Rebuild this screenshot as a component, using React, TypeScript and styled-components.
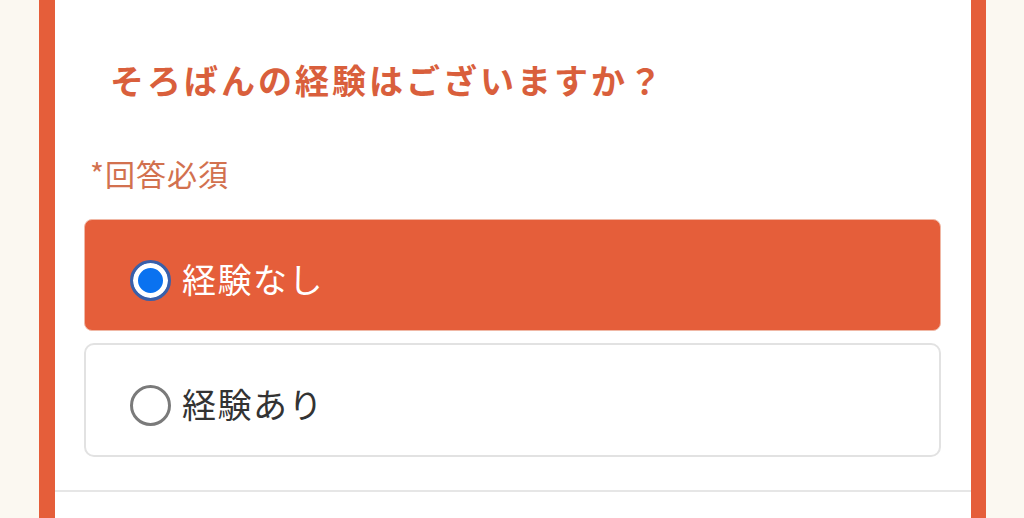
import React from "react";
import styled, { createGlobalStyle } from "styled-components";

const Global = createGlobalStyle`
  html, body { margin: 0; padding: 0; background: #fbf8f1; }
  body { font-family: "Noto Sans CJK JP", "Noto Sans", sans-serif; }
`;

const Page = styled.div`
  height: 518px;
  overflow: hidden;
  padding-left: 39px;
  box-sizing: border-box;
`;

const Card = styled.div`
  width: 947px;
  height: 518px;
  box-sizing: border-box;
  background: #ffffff;
  border-left: 16px solid #e55e3a;
  border-right: 15px solid #e55e3a;
  display: flex;
  flex-direction: column;
`;

const Question = styled.section`
  padding: 56px 30px 0 29px;
  display: flex;
  flex-direction: column;
  border-bottom: 2px solid #e6e6e6;
  padding-bottom: 33px;
`;

const Title = styled.h2`
  margin: 0 0 0 26px;
  font-size: 34px;
  line-height: 48px;
  font-weight: 700;
  letter-spacing: 3px;
  color: #d95f3c;
`;

const Required = styled.div`
  margin: 49px 0 0 6px;
  font-size: 30px;
  line-height: 40px;
  color: #d2714f;
  letter-spacing: 1px;
`;

const Options = styled.div`
  margin-top: 26px;
  display: flex;
  flex-direction: column;
  gap: 12px;
`;

const Option = styled.label<{ $selected: boolean }>`
  display: flex;
  align-items: center;
  gap: 11px;
  box-sizing: border-box;
  height: ${(p) => (p.$selected ? "112px" : "114px")};
  padding-top: 10px;
  padding-left: ${(p) => (p.$selected ? "45px" : "44px")};
  border-radius: ${(p) => (p.$selected ? "8px" : "10px")};
  background: ${(p) => (p.$selected ? "#e55e3a" : "#ffffff")};
  border: ${(p) => (p.$selected ? "1px solid #f0b8a6" : "2px solid #e2e2e2")};
  color: ${(p) => (p.$selected ? "#ffffff" : "#333333")};
  font-size: 34px;
  letter-spacing: 1.5px;
  line-height: 1;
`;

const Radio = styled.span<{ $selected: boolean }>`
  width: 41px;
  height: 41px;
  box-sizing: border-box;
  border-radius: 50%;
  flex-shrink: 0;
  ${(p) =>
    p.$selected
      ? `
    border: 3px solid #3a5fa8;
    background: #0a72f0;
    box-shadow: inset 0 0 0 5px #ffffff;
  `
      : `
    border: 3px solid #7a7a7a;
    background: #ffffff;
  `}
`;

const OptionText = styled.span`
  margin-top: -2px;
`;

const options = [
  { label: "経験なし", selected: true },
  { label: "経験あり", selected: false },
];

export default function App() {
  return (
    <>
      <Global />
      <Page>
        <Card>
          <Question>
            <Title>そろばんの経験はございますか？</Title>
            <Required>*回答必須</Required>
            <Options>
              {options.map((o) => (
                <Option key={o.label} $selected={o.selected}>
                  <Radio $selected={o.selected} />
                  <OptionText>{o.label}</OptionText>
                </Option>
              ))}
            </Options>
          </Question>
        </Card>
      </Page>
    </>
  );
}
